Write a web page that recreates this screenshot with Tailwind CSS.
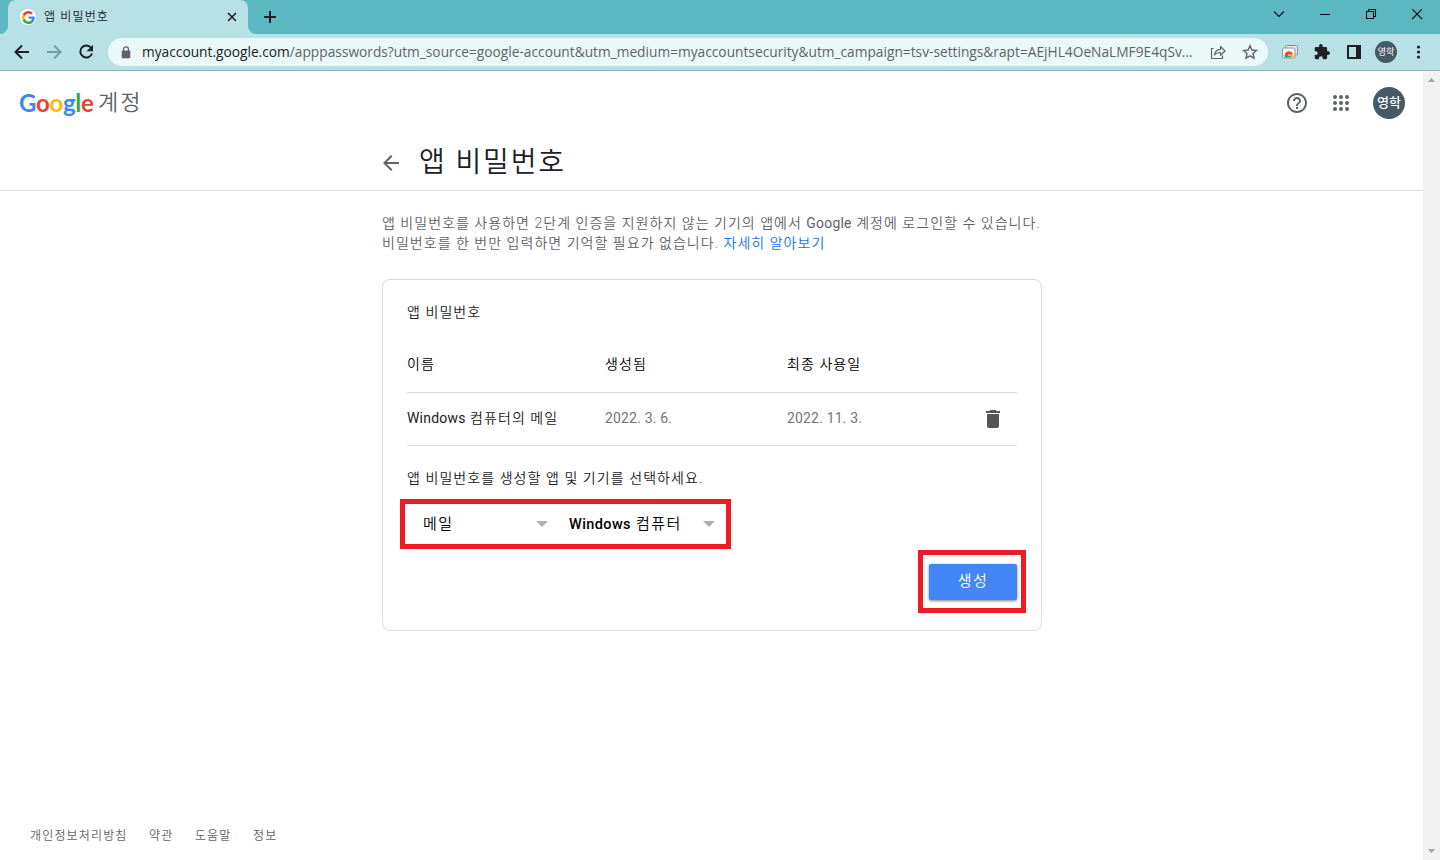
<!DOCTYPE html>
<html lang="ko">
<head>
<meta charset="utf-8">
<title>앱 비밀번호</title>
<script src="https://cdn.jsdelivr.net/npm/@tailwindcss/browser@4"></script>
</head>
<body class="flex h-[860px] w-[1440px] flex-col overflow-hidden bg-white font-[Roboto,'Noto_Sans_CJK_KR',sans-serif] text-[14px] font-[350] tracking-[1.070px] whitespace-nowrap text-[#202124]">

<!-- Tab strip -->
<header class="flex h-[34px] shrink-0 bg-[#5bb8c1]">
  <div class="flex w-2 items-end bg-[#b7e1e4]"><div class="h-[34px] w-2 rounded-br-lg bg-[#5bb8c1]"></div></div>
  <div class="flex w-[240px] bg-[#5bb8c1]">
    <div class="flex h-[34px] w-[240px] items-center rounded-t-lg bg-[#b7e1e4] pr-2 pl-3">
      <span class="flex size-4 items-center justify-center rounded-full bg-white">
        <svg class="size-[13px]" viewBox="0 0 48 48"><path fill="#EA4335" d="M24 9.500c3.500 0 6.700 1.200 9.200 3.600l6.900-6.900C35.900 2.400 30.500 0 24 0 14.600 0 6.500 5.400 2.600 13.200l8 6.200C12.400 13.700 17.700 9.500 24 9.500z"/><path fill="#4285F4" d="M47 24.600c0-1.600-.2-3.100-.4-4.600H24v9h12.900c-.6 3-2.300 5.500-4.800 7.200l7.700 6C44.400 38 47 31.800 47 24.600z"/><path fill="#FBBC05" d="M10.500 28.600a14.500 14.500 0 0 1 0-9.200l-8-6.200a24 24 0 0 0 0 21.600z"/><path fill="#34A853" d="M24 48c6.500 0 11.900-2.100 15.900-5.800l-7.700-6c-2.200 1.400-4.900 2.300-8.200 2.300-6.300 0-11.600-4.200-13.500-9.900l-8 6.200C6.500 42.600 14.600 48 24 48z"/></svg>
      </span>
      <span class="ml-2 flex-1 text-[12px] tracking-[1.150px]">앱 비밀번호</span>
      <svg class="size-4" viewBox="0 0 16 16" stroke="#202124" stroke-width="1.600"><path d="M4 4l8 8M12 4l-8 8"/></svg>
    </div>
  </div>
  <div class="flex w-2 bg-[#b7e1e4]"><div class="h-[34px] w-2 rounded-bl-lg bg-[#5bb8c1]"></div></div>
  <svg class="mt-[9px] ml-[6px] size-4" viewBox="0 0 16 16" stroke="#202124" stroke-width="2"><path d="M2 8h12M8 2v12"/></svg>
  <svg class="ml-auto h-7 w-[170px]" viewBox="0 0 170 28" fill="none" stroke="#111" stroke-width="1.100"><path d="M4 11.500l5 5 5-5"/><path d="M50 14.500h10"/><path d="M96.500 11.500h7v7h-7zM98.500 11.500v-2h7v7h-2"/><path d="M142.200 9.200l9.800 9.800M152 9.200l-9.800 9.800"/></svg>
</header>

<!-- Toolbar -->
<div class="flex h-[37px] shrink-0 items-center border-b border-[#8fb4b8] bg-[#b7e1e4] pl-3 text-[#202124]">
  <svg class="size-5" viewBox="0 0 20 20" fill="none" stroke="currentColor" stroke-width="2"><path d="M17 10H4M10 3.500L3.500 10l6.500 6.500"/></svg>
  <svg class="ml-3 size-5 text-[#7d9a9d]" viewBox="0 0 20 20" fill="none" stroke="currentColor" stroke-width="2"><path d="M3 10h13M10 3.500l6.500 6.500-6.500 6.500"/></svg>
  <svg class="ml-3 size-5" viewBox="0 0 20 20"><path fill="none" stroke="currentColor" stroke-width="2" d="M15.300 6.200A6 6 0 1 0 16 11.500"/><path fill="currentColor" d="M17 2.800v6.400h-6.400z"/></svg>
  <div class="ml-3 flex h-7 w-[1160px] items-center rounded-full bg-[#ebf8f8] pr-[10px] pl-[13px]">
    <svg class="h-[13px] w-[10px]" viewBox="0 0 10 13"><rect x="0.700" y="4.500" width="8.600" height="7.800" rx="1" fill="#5f6368"/><path d="M2.500 5V3.300a2.500 2.500 0 0 1 5 0V5" fill="none" stroke="#5f6368" stroke-width="1.300"/></svg>
    <span class="ml-[11px] w-[1052px] font-['Open_Sans',sans-serif] text-[13.740px] font-normal tracking-normal text-[#5f6368]"><span class="text-[#202124]">myaccount.google.com</span>/apppasswords?utm_source=google-account&amp;utm_medium=myaccountsecurity&amp;utm_campaign=tsv-settings&amp;rapt=AEjHL4OeNaLMF9E4qSv...</span>
    <svg class="ml-auto size-4" viewBox="0 0 16 16" fill="none" stroke="#5f6368" stroke-width="1.200"><path d="M3.500 4.500h-2v10h11v-3"/><path d="M4.500 11c.4-3.500 2.600-5.500 6-5.700V2.500L15 7l-4.500 4.300V8.500c-3 0-4.600.7-6 2.500z" stroke-linejoin="round"/></svg>
    <svg class="ml-4 size-4" viewBox="0 0 16 16" fill="none" stroke="#5f6368" stroke-width="1.400"><path d="M8 1.800l1.900 4.200 4.500.5-3.400 3.100 1 4.500L8 11.800l-4 2.300 1-4.500L1.600 6.500l4.500-.5z"/></svg>
  </div>
  <svg class="ml-[14px] size-4" viewBox="0 0 16 16"><rect x="3.500" y="1.500" width="12" height="9.500" rx="1" fill="#e8e8e8" stroke="#8b8b8b"/><rect x="0.500" y="4" width="12.500" height="10" rx="1" fill="#f4f4f4" stroke="#999"/><path d="M2.500 13.500a4.500 4.500 0 0 1 1-4l2.500 3v1z" fill="#34a853"/><path d="M2.800 10a4.500 4.500 0 0 1 8.200 0H7l-1.800 2.200z" fill="#ea4335"/><path d="M7 10h4a4.300 4.300 0 0 1 .3 3.500H7z" fill="#fbbc05"/><path d="M4.900 13.500a2 2 0 0 1 4 0z" fill="#4285f4"/></svg>
  <svg class="ml-4 size-4" viewBox="1 1 22 22" fill="currentColor"><path d="M20.500 11H19V7a2 2 0 0 0-2-2h-4V3.500a2.500 2.500 0 0 0-5 0V5H4a2 2 0 0 0-2 2v3.800h1.500a2.700 2.700 0 0 1 0 5.400H2V20a2 2 0 0 0 2 2h3.800v-1.500a2.700 2.700 0 0 1 5.400 0V22H17a2 2 0 0 0 2-2v-4h1.500a2.500 2.500 0 0 0 0-5z"/></svg>
  <svg class="ml-4 size-4" viewBox="0 0 16 16"><path fill="currentColor" fill-rule="evenodd" d="M1 1h14v14H1zM3 3v10h7V3z"/></svg>
  <span class="ml-[13px] flex size-[22px] items-center justify-center rounded-full bg-[#455a64] pt-px text-[9px] font-normal tracking-normal text-white">영학</span>
  <svg class="ml-[13px] size-4" viewBox="0 0 16 16" fill="currentColor"><circle cx="8.500" cy="3" r="1.600"/><circle cx="8.500" cy="8" r="1.600"/><circle cx="8.500" cy="13" r="1.600"/></svg>
</div>

<div class="flex min-h-0 flex-1">
  <div class="flex w-[1423px] flex-col">
    <div class="flex h-16 shrink-0 items-center pr-[18px] pl-[19px]">
      <span class="w-[75px] font-[Lato,sans-serif] text-[24px] leading-8 font-bold tracking-[-0.300px] text-[#4285f4]">G<span class="text-[#ea4335]">o</span><span class="text-[#fbbc05]">o</span>g<span class="text-[#34a853]">l</span><span class="text-[#ea4335]">e</span></span>
      <span class="ml-1 text-[22px] leading-8 tracking-[1.900px] text-[#5f6368]">계정</span>
      <svg class="ml-auto size-6" viewBox="0 0 24 24" fill="#5f6368"><path d="M11 18h2v-2h-2v2zm1-16C6.480 2 2 6.480 2 12s4.480 10 10 10 10-4.480 10-10S17.520 2 12 2zm0 18c-4.410 0-8-3.590-8-8s3.590-8 8-8 8 3.590 8 8-3.590 8-8 8zm0-14c-2.210 0-4 1.790-4 4h2c0-1.100.9-2 2-2s2 .9 2 2c0 2-3 1.750-3 5h2c0-2.250 3-2.500 3-5 0-2.210-1.790-4-4-4z"/></svg>
      <svg class="ml-5 size-6" viewBox="0 0 24 24" fill="#5f6368"><circle cx="6" cy="6" r="2"/><circle cx="12" cy="6" r="2"/><circle cx="18" cy="6" r="2"/><circle cx="6" cy="12" r="2"/><circle cx="12" cy="12" r="2"/><circle cx="18" cy="12" r="2"/><circle cx="6" cy="18" r="2"/><circle cx="12" cy="18" r="2"/><circle cx="18" cy="18" r="2"/></svg>
      <span class="ml-5 flex size-8 items-center justify-center rounded-full bg-[#455a64] text-[13px] font-medium tracking-normal text-white">영학</span>
    </div>

    <div class="flex h-14 shrink-0 border-b border-[#dadce0] pl-[378.500px]">
      <svg class="mt-4 size-6" viewBox="0 0 24 24" fill="#5f6368"><path d="M20 11H7.830l5.590-5.590L12 4l-8 8 8 8 1.410-1.410L7.830 13H20v-2z"/></svg>
      <h1 class="ml-[16.500px] text-[28px] leading-[55px] tracking-[1.900px]">앱 비밀번호</h1>
    </div>

    <main class="ml-[382px] w-[660px] pt-[22px]">
      <p class="leading-5 tracking-[1.030px] text-[#5f6368]">앱 비밀번호를 사용하면 2단계 인증을 지원하지 않는 기기의 앱에서 <span class="font-normal tracking-[0.200px]">Google</span> 계정에 로그인할 수 있습니다.<br>비밀번호를 한 번만 입력하면 기억할 필요가 없습니다. <a class="text-[#1a73e8]">자세히 알아보기</a></p>

      <section class="mt-[26px] h-[352px] rounded-lg border border-[#dadce0] px-6 pt-[22px]">
        <h2 class="leading-5">앱 비밀번호</h2>
        <div class="mt-[14px] grid h-[57px] grid-cols-[198px_182px_1fr] items-center border-b border-[#dadce0] text-black">
          <span>이름</span><span>생성됨</span><span>최종 사용일</span>
        </div>
        <div class="grid h-[53px] grid-cols-[198px_182px_1fr_36.500px] items-center border-b border-[#dadce0]">
          <span class="pb-0.5"><span class="font-normal tracking-[0.200px]">Windows</span> 컴퓨터의 메일</span>
          <span class="pb-px font-normal tracking-[0.170px] text-[#757575]">2022. 3. 6.</span>
          <span class="pb-px font-normal tracking-[0.170px] text-[#757575]">2022. 11. 3.</span>
          <svg class="size-6" viewBox="0 0 24 24" fill="#555"><path d="M6 19c0 1.100.9 2 2 2h8c1.100 0 2-.9 2-2V7H6v12zM19 4h-3.500l-1-1h-5l-1 1H5v2h14V4z"/></svg>
        </div>
        <p class="mt-[22px] leading-5">앱 비밀번호를 생성할 앱 및 기기를 선택하세요.</p>
        <div class="mt-[11px] -ml-[7px] flex h-[50px] w-[331px] items-center border-[5px] border-[#ed1c24] pr-[11px] pl-[18px] text-[15px] tracking-[1.400px] text-black">
          <span class="w-[113px]">메일</span>
          <svg class="h-[6px] w-3" viewBox="0 0 12 6"><path d="M0 0h12L6 6z" fill="#b0b0b0"/></svg>
          <span class="ml-[21px] flex-1"><span class="text-[14.500px] font-medium tracking-[0.400px]">Windows</span> 컴퓨터</span>
          <svg class="h-[6px] w-3" viewBox="0 0 12 6"><path d="M0 0h12L6 6z" fill="#b0b0b0"/></svg>
        </div>
        <div class="mt-px -mr-[9px] ml-auto flex h-[63px] w-[108px] items-center justify-end border-[5px] border-[#ed1c24] pr-1">
          <button class="h-9 w-[88px] rounded-xs bg-[#4285f4] text-[15px] tracking-[1.400px] text-white shadow-[0_1px_3px_rgba(0,0,0,0.500)]">생성</button>
        </div>
      </section>
    </main>

    <footer class="mt-auto flex h-12 items-center gap-[21.500px] pl-[30px] text-[12px] tracking-[1.150px] text-[#5f6368]">
      <span>개인정보처리방침</span><span>약관</span><span>도움말</span><span>정보</span>
    </footer>
  </div>
  <div class="flex w-[17px] flex-col items-center justify-between bg-[#f1f1f1] pt-[7px] pb-[7px]">
    <svg class="h-1 w-[7px]" viewBox="0 0 7 4"><path d="M0 4h7L3.500 0z" fill="#a3a3a3"/></svg>
    <svg class="h-1 w-[7px]" viewBox="0 0 7 4"><path d="M0 0h7L3.500 4z" fill="#a3a3a3"/></svg>
  </div>
</div>
</body>
</html>
